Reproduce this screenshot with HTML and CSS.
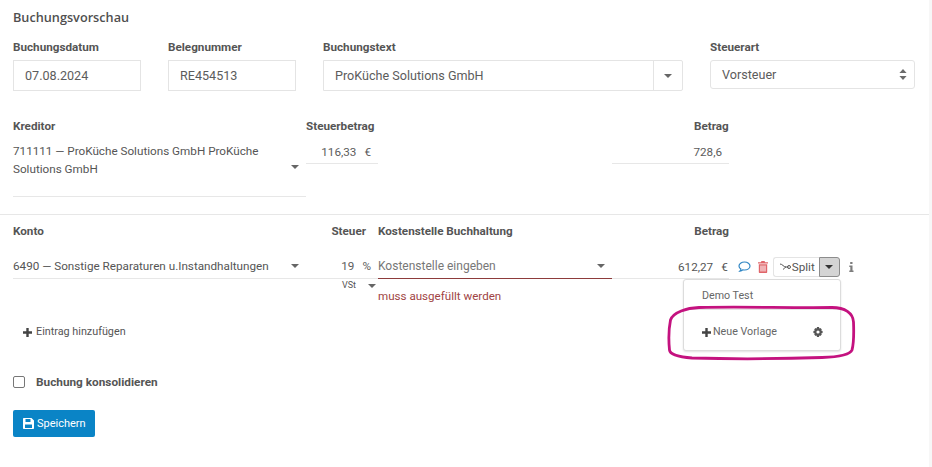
FILE: index.html
```html
<!DOCTYPE html>
<html lang="de">
<head>
<meta charset="utf-8">
<title>Buchungsvorschau</title>
<link rel="stylesheet" href="styles.css">
</head>
<body>
<main class="page">
  <section class="head">
    <h2 class="title">Buchungsvorschau</h2>
    <div class="row-top">
      <div class="field w-date">
        <label class="lbl">Buchungsdatum</label>
        <div class="box">07.08.2024</div>
      </div>
      <div class="field w-date">
        <label class="lbl">Belegnummer</label>
        <div class="box">RE454513</div>
      </div>
      <div class="field w-text">
        <label class="lbl">Buchungstext</label>
        <div class="box group">
          <span class="group-text">ProKüche Solutions GmbH</span>
          <span class="addon"><i class="caret"></i></span>
        </div>
      </div>
      <div class="field w-sel">
        <label class="lbl">Steuerart</label>
        <div class="box select">
          <span>Vorsteuer</span>
          <svg class="updown" width="8" height="11" viewBox="0 0 8 11"><path d="M4 0l3.600 4H.4zM4 11L.4 7h7.200z" fill="#6b6b6b"/></svg>
        </div>
      </div>
    </div>
    <div class="row-mid">
      <div class="kreditor">
        <label class="lbl">Kreditor</label>
        <div class="kreditor-val">
          <span class="kreditor-text">711111 — ProKüche Solutions GmbH ProKüche Solutions GmbH</span>
          <i class="caret"></i>
        </div>
      </div>
      <div class="steuerbetrag">
        <label class="lbl">Steuerbetrag</label>
        <div class="line-val tax"><span>116,33</span><span>€</span></div>
      </div>
      <div class="betrag">
        <label class="lbl">Betrag</label>
        <div class="line-val total">728,6</div>
      </div>
    </div>
  </section>
  <section class="lines">
    <div class="line-grid">
      <label class="lbl">Konto</label>
      <label class="lbl right">Steuer</label>
      <label class="lbl">Kostenstelle Buchhaltung</label>
      <label class="lbl amount-lbl">Betrag</label>
      <div></div>

      <div class="cell konto"><span>6490 — Sonstige Reparaturen u.Instandhaltungen</span><i class="caret"></i></div>
      <div class="cell steuer"><span>19</span><span>%</span></div>
      <div class="cell kst"><span>Kostenstelle eingeben</span><i class="caret"></i></div>
      <div class="cell amount">
        <span class="amt">612,27</span><span class="eur">€</span>
        <svg class="ic-comment" width="13" height="12" viewBox="0 0 13 12"><path d="M6.500 1C3.400 1 1 2.800 1 5c0 1.200.7 2.300 1.900 3-.1.800-.5 1.500-1.100 2.200 1.200-.2 2.300-.7 3.100-1.400.5.100 1.100.2 1.600.2 3.100 0 5.500-1.800 5.500-4S9.600 1 6.500 1z" fill="none" stroke="#2f86c4" stroke-width="1.200"/></svg>
        <svg class="ic-trash" width="10" height="12" viewBox="0 0 10 12"><path d="M3.500 0h3l.7 1.300H10v1.200H0V1.300h2.800zM.8 3.300h8.400V11c0 .6-.4 1-1 1H1.800c-.6 0-1-.4-1-1zm1.700 1.200v6h1v-6zm2 0v6h1v-6zm2 0v6h1v-6z" fill="#e0656a"/></svg>
        <span class="split-group">
          <span class="split-btn">
            <svg width="11" height="8" viewBox="0 0 11 8"><path d="M0 1c2.500 0 3.500 3 6 3h2.500M3 6.500C4 6.500 4.500 4 6 4" fill="none" stroke="#555" stroke-width="1"/><circle cx="9" cy="4" r="1.500" fill="none" stroke="#555" stroke-width="1"/></svg>Split</span><span class="split-caret"><i class="caret dark"></i></span>
        </span>
        <svg class="ic-info" width="5" height="10" viewBox="0 0 5 10"><path d="M1.200 0h2.300v2H1.200zM.3 3.500h3.200V8.500h1V10H.3V8.500h1v-3.500h-1z" fill="#7d7d7d"/></svg>
      </div>

      <div class="vst"><span>VSt</span><i class="caret"></i></div>
      <div class="err">muss ausgefüllt werden</div>
    </div>
    <div class="add"><svg class="ic-plus" width="9" height="9" viewBox="0 0 9 9"><path d="M3.300 0h2.400v3.300H9v2.400H5.700V9H3.300V5.700H0V3.300h3.300z" fill="#444"/></svg>Eintrag hinzufügen</div>
    <label class="consol"><span class="check"></span><span>Buchung konsolidieren</span></label>
    <button class="save" type="button"><svg width="11" height="11" viewBox="0 0 11 11"><path d="M1 0h7.500L11 2.500V10c0 .6-.4 1-1 1H1c-.6 0-1-.4-1-1V1c0-.6.4-1 1-1zm1.500 1v3h5V1zm-.5 5.500V10h7V6.500z" fill="#fff" fill-rule="evenodd"/></svg>Speichern</button>
  </section>

  <div class="menu">
    <div class="menu-item">Demo Test</div>
    <div class="menu-foot">
      <span class="menu-new"><svg width="9" height="9" viewBox="0 0 9 9"><path d="M3.300 0h2.400v3.300H9v2.400H5.700V9H3.300V5.700H0V3.300h3.300z" fill="#444"/></svg>Neue Vorlage</span>
      <svg width="10" height="10" viewBox="0 0 10 10"><path fill-rule="evenodd" fill="#555" d="M4 0h2l.3 1.400 1-.5 1.500 1.400-.6 1.100L9.600 4v2l-1.400.4.600 1.200-1.500 1.400-1-.6L6 10H4l-.4-1.600-1 .6L1.200 7.600l.6-1.200L.4 6V4l1.400-.6-.6-1.100L2.700.9l1 .5zM5 3.400a1.600 1.600 0 1 0 0 3.200 1.600 1.600 0 0 0 0-3.200z"/></svg>
    </div>
  </div>
  <svg class="mark" width="190" height="56" viewBox="0 0 190 56"><path d="M32 2.500C75 1.500 120 3 165 2.500 178 2.500 186 8 186.500 17 187 30 187 38 185 45 183 50 170 52 155 52.500 110 54 60 54 25 53 12 52 3 50 2.500 45 1.500 35 1.500 25 3.500 15 6 7 20 3 32 2.500z" fill="none" stroke="#c4127f" stroke-width="2.800"/></svg>
</main>
</body>
</html>
```

FILE: styles.css
```css
* { box-sizing: border-box; }
html, body { margin: 0; height: 100%; background: #f7f7f7; }
body { overflow: hidden; }
.page {
  position: relative;
  width: 929px;
  height: 467px;
  background: #fff;
  font-family: Roboto, "Liberation Sans", sans-serif;
  font-size: 13px;
  color: #555;
}
.head { height: 215px; padding: 0 13px; border-bottom: 1px solid #e7e7e7; }
.title {
  margin: 0;
  padding-top: 9px;
  height: 40px;
  font-family: "Open Sans", sans-serif;
  font-size: 12.7px;
  line-height: 16px;
  font-weight: 600;
  color: #4f4f4f;
}
.lbl {
  display: block;
  font-size: 11.7px;
  line-height: 14px;
  font-weight: 700;
  color: #555;
}
.row-top { display: flex; gap: 27px; height: 76px; }
.field { display: flex; flex-direction: column; gap: 6px; }
.w-date { width: 128px; }
.w-text { width: 360px; }
.w-sel { width: 205px; }
.box {
  height: 31px;
  padding: 0 11px;
  border: 1px solid #e4e4e4;
  display: flex;
  align-items: center;
  font-size: 12.6px;
  color: #5c5c5c;
}
.group { padding: 0 0 0 11px; border-radius: 0 2px 2px 0; }
.group-text { flex: 1; }
.addon {
  width: 29px;
  align-self: stretch;
  border-left: 1px solid #e4e4e4;
  display: flex;
  align-items: center;
  justify-content: center;
}
.select { height: 29px; border-radius: 3px; justify-content: space-between; padding: 0 7px 0 11px; }
.updown { display: block; }
.caret {
  display: inline-block;
  width: 0;
  height: 0;
  border-left: 4px solid transparent;
  border-right: 4px solid transparent;
  border-top: 4px solid #666;
}
.caret.dark { border-top-color: #333; }
.row-mid { display: flex; padding-top: 3px; }
.kreditor { width: 293px; height: 78px; border-bottom: 1px solid #e7e7e7; }
.kreditor-val { position: relative; margin-top: 9px; font-size: 11.7px; line-height: 18px; color: #555; }
.kreditor-text { display: block; width: 265px; }
.kreditor-val .caret { position: absolute; left: 278px; top: 23px; }
.steuerbetrag { width: 72px; }
.line-val {
  margin-top: 12px;
  height: 19px;
  border-bottom: 1px solid #e7e7e7;
  font-size: 11.7px;
  line-height: 15px;
  color: #5c5c5c;
}
.tax { display: flex; justify-content: flex-end; gap: 8px; padding-right: 7px; }
.betrag { margin-left: 234px; width: 117px; display: flex; flex-direction: column; align-items: flex-end; }
.betrag .lbl { width: 35px; }
.total { width: 117px; text-align: right; padding-right: 7px; }
.lines { padding: 9px 13px 0; }
.line-grid {
  display: grid;
  grid-template-columns: 293px 72px 234px 117px 1fr;
  grid-template-rows: 14px 41px 24px;
}
.right { text-align: right; padding-right: 12px; }
.amount-lbl { text-align: right; }
.cell {
  height: 33px;
  margin-top: 8px;
  padding-top: 8px;
  border-bottom: 1px solid #e7e7e7;
  display: flex;
  align-items: center;
  font-size: 11.7px;
  color: #555;
}
.konto { justify-content: space-between; padding-right: 7px; }
.steuer { justify-content: flex-end; gap: 8px; padding-right: 7px; color: #5c5c5c; }
.kst { border-bottom-color: #8d3b3b; justify-content: space-between; padding-right: 7px; color: #777; font-size: 12px; }
.amount { grid-column: 4 / 6; position: relative; border-bottom: 0; }
.amount::before {
  content: "";
  position: absolute;
  left: 0;
  bottom: 0;
  width: 117px;
  border-bottom: 1px solid #e7e7e7;
}
.amt { margin-left: 66px; }
.eur { margin-left: 8px; }
.ic-comment { margin-left: 10px; }
.ic-trash { margin-left: 7px; }
.split-group { display: inline-flex; margin-left: 5px; height: 20px; }
.split-btn {
  display: inline-flex;
  align-items: center;
  gap: 1px;
  padding: 0 4px 0 6px;
  border: 1px solid #e4e4e4;
  border-right: 0;
  border-radius: 3px 0 0 3px;
  font-size: 11.7px;
  color: #555;
}
.split-caret {
  width: 21px;
  display: flex;
  align-items: center;
  justify-content: center;
  background: #d4d4d4;
  border: 1px solid #8c8c8c;
  border-radius: 0 3px 3px 0;
}
.ic-info { margin-left: 9px; }
.vst { display: flex; align-items: flex-start; font-size: 9px; line-height: 12px; padding: 0 0 0 36px; gap: 12px; color: #555; grid-column: 2; }
.vst .caret { margin-top: 5px; }
.err { font-size: 11.6px; line-height: 14px; color: #a04444; padding-top: 10px; }
.add { margin-top: 22px; padding-left: 10px; display: flex; align-items: center; gap: 4px; font-size: 10.8px; line-height: 14px; color: #555; }
.consol { display: flex; align-items: center; gap: 11px; margin-top: 36px; font-size: 11.8px; line-height: 14px; font-weight: 700; color: #555; }
.check { width: 12px; height: 12px; border: 1px solid #777; border-radius: 2px; background: #fff; }
.save {
  display: flex;
  align-items: center;
  gap: 3px;
  margin-top: 21px;
  width: 82px;
  height: 27px;
  padding: 0 0 0 10px;
  border: 0;
  border-radius: 2px;
  background: #0a84c6;
  color: #fff;
  font-family: Roboto, sans-serif;
  font-size: 11px;
}
.menu {
  position: absolute;
  left: 683px;
  top: 279px;
  width: 158px;
  height: 72px;
  border: 1px solid #dcdcdc;
  border-radius: 3px;
  box-shadow: 0 1px 2px rgba(0,0,0,.12);
  background: #fff;
  font-size: 10.7px;
  color: #666;
}
.menu-item { height: 30px; padding: 9px 0 0 18px; line-height: 14px; border-bottom: 1px solid #e4e4e4; }
.menu-foot { display: flex; justify-content: space-between; align-items: center; padding: 15px 17px 0 18px; }
.menu-new { display: flex; align-items: center; gap: 2px; line-height: 14px; }
.mark { position: absolute; left: 667px; top: 305px; pointer-events: none; }
```
